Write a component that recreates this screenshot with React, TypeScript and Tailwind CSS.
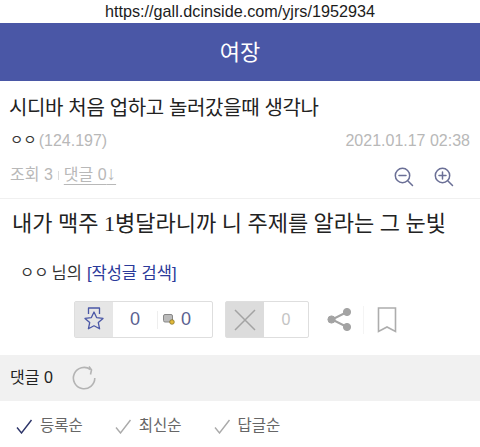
const kr = { fontFamily: '"Liberation Sans","Noto Sans CJK KR",sans-serif' };

function Zoom({ plus }: { plus?: boolean }) {
  return (
    <svg width="20" height="20" viewBox="0 0 20 20" fill="none" stroke="#6a6f96" strokeWidth="1.5" strokeLinecap="round">
      <circle cx="8.5" cy="8.5" r="7.2" />
      <path d="M14 14l4.5 4.5M5 8.5h7" />
      {plus && <path d="M8.5 5v7" />}
    </svg>
  );
}

function Check({ color }: { color: string }) {
  return (
    <svg width="17" height="15" viewBox="0 0 17 15" fill="none" stroke={color} strokeWidth="1.4">
      <path d="M1 8.5l4.5 5.5L15.5 1" />
    </svg>
  );
}

export default function App() {
  return (
    <div className="w-[480px] h-[447px] bg-white overflow-hidden flex flex-col" style={kr}>
      <div className="h-[23px] flex items-center justify-center text-[16.2px] text-[#1c1c1c]">
        https://gall.dcinside.com/yjrs/1952934
      </div>
      <div className="h-[58px] bg-[#4a57a6] flex items-center justify-center text-white text-[22px]">여장</div>

      <div className="h-[118px] px-[10px] border-b border-[#f0f0f0] flex flex-col">
        <div className="h-[54px] flex items-center text-[20px] text-[#222] tracking-[-0.35px] -ml-px">시디바 처음 업하고 놀러갔을때 생각나</div>
        <div className="h-[18px] -mt-[3px] flex items-center justify-between text-[16px] text-[#b8b8b8]">
          <div className="flex items-center gap-[2px]">
            <span className="text-[#333] text-[14.5px]">ㅇㅇ</span>
            <span>(124.197)</span>
          </div>
          <span>2021.01.17 02:38</span>
        </div>
        <div className="flex items-start justify-between mt-[13px] pr-[16px]">
          <div className="flex items-center text-[16px] text-[#b8b8b8]">
            <span>조회 3</span>
            <span className="mx-[5px] w-px h-[9px] bg-[#ddd]"></span>
            <span className="underline underline-offset-4 whitespace-nowrap">댓글 0<span className="text-[19px] leading-[20px]">↓</span></span>
          </div>
          <div className="flex items-center gap-[20px] mt-[4px]">
            <Zoom />
            <Zoom plus />
          </div>
        </div>
      </div>

      <div className="pl-[12px] pt-[9px] h-[48px] text-[22px] text-[#222] leading-[32px] whitespace-nowrap" style={{ fontFamily: '"Liberation Serif","Noto Sans CJK KR",serif' }}>
        내가 맥주 1병달라니까 니 주제를 알라는 그 눈빛
      </div>

      <div className="pl-[20px] mt-[16px] h-[20px] flex items-center text-[16.5px] text-[#333]">
        <span className="text-[15.5px] mr-[3px]">ㅇㅇ</span>
        <span>님의</span>
        <span className="text-[#2b3a9a] ml-[5px]">[작성글 검색]</span>
      </div>

      <div className="flex items-center mt-[18px] pl-[74px] h-[37px]">
        <div className="w-[139px] h-[37px] border border-[#dedede] rounded-[2px] flex">
          <div className="w-[38px] bg-[#e6e6e6] flex items-center justify-center">
            <svg width="22" height="25" viewBox="0 0 22 25" fill="none" stroke="#4a57a6" strokeWidth="1.3" strokeLinejoin="round">
              <path d="M5.5 7V1h11v6" />
              <path d="M11 5l2.6 5.6 6.4.8-4.7 4.2 1.3 6.2L11 18.8l-5.6 3 1.3-6.2L2 11.4l6.4-.8z" />
            </svg>
          </div>
          <div className="flex-1 flex items-center text-[#5a6190] text-[18px]">
            <span className="w-[44px] text-center">0</span>
            <span className="w-px h-[18px] bg-[#eee]"></span>
            <svg width="12" height="11" viewBox="0 0 12 11" className="ml-[5px]">
              <rect x="0.5" y="0.5" width="9" height="7.5" rx="1.5" fill="#bbb" stroke="#888" />
              <circle cx="9" cy="8" r="2.3" fill="#e2b93b" stroke="#7a6a20" strokeWidth="0.7" />
            </svg>
            <span className="ml-[6px]">0</span>
          </div>
        </div>

        <div className="w-[84px] h-[37px] ml-[12px] border border-[#dedede] rounded-[2px] flex">
          <div className="w-[38px] bg-[#dcdcdc] flex items-center justify-center">
            <svg width="24" height="24" viewBox="0 0 24 24" stroke="#a3a3a3" strokeWidth="1.5">
              <path d="M2 2l20 20M22 2L2 22" />
            </svg>
          </div>
          <div className="flex-1 flex items-center justify-center text-[#c4c4c4] text-[16px]">0</div>
        </div>

        <svg width="25" height="25" viewBox="0 0 25 25" className="ml-[18px]" fill="#a3a3a3" stroke="#a3a3a3">
          <path d="M20 5L5 12.5 20 20" fill="none" strokeWidth="2" />
          <circle cx="20" cy="5" r="3.6" />
          <circle cx="4.5" cy="12.5" r="3.6" />
          <circle cx="20" cy="20" r="3.6" />
        </svg>
        <span className="ml-[11px] w-px h-[28px] bg-[#f4f4f4]"></span>
        <svg width="20" height="26" viewBox="0 0 20 26" fill="none" stroke="#adadad" strokeWidth="1.6" className="ml-[13px]">
          <path d="M1.5 1h17v23.5L10 20l-8.5 4.5z" />
        </svg>
      </div>

      <div className="mt-[17px] h-[46px] bg-[#f1f1f1] pl-[10px] flex items-center text-[16px] text-[#222]">
        <span>댓글 0</span>
        <svg width="24" height="24" viewBox="0 0 24 24" fill="none" stroke="#b4b4b4" strokeWidth="1.6" className="ml-[19px]">
          <path d="M18.5 3.5A10.7 10.7 0 1 0 22.8 12" />
          <path d="M17 0.500l2.500 3.500-1 4.500" />
        </svg>
      </div>

      <div className="flex-1 pl-[16px] pt-[4px] flex items-center text-[15.5px] text-[#666]">
        <Check color="#2c3468" />
        <span className="ml-[7px]">등록순</span>
        <span className="ml-[32px]"><Check color="#aaa" /></span>
        <span className="ml-[7px]">최신순</span>
        <span className="ml-[32px]"><Check color="#aaa" /></span>
        <span className="ml-[7px]">답글순</span>
      </div>
    </div>
  );
}
